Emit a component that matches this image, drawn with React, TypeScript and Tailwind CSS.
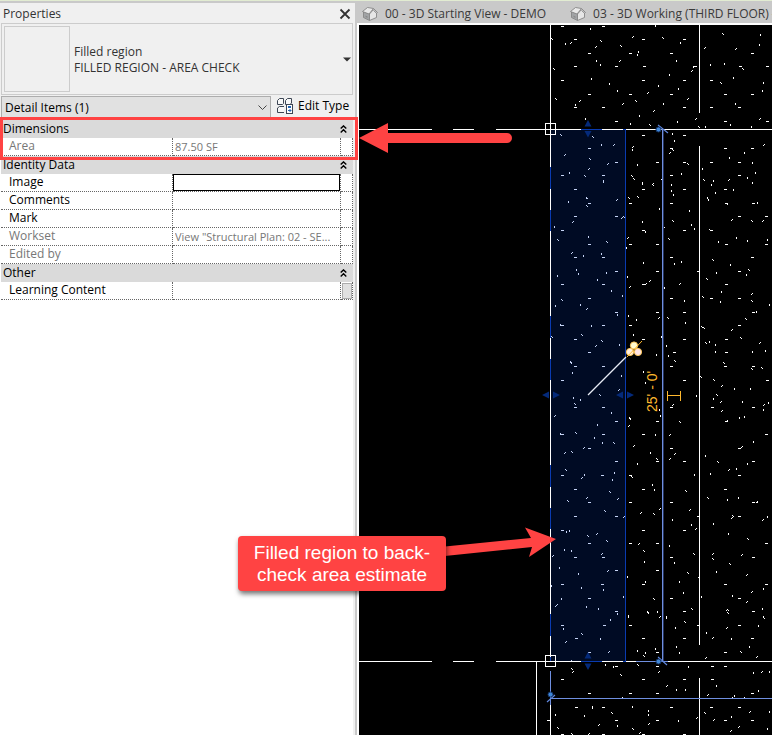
import React from "react";

const HATCH_H =
  "562,26 603,26 575,39 643,39 684,39 589,53 630,53 671,53 752,53 575,66 616,66 644,66 695,66 740,66 767,66 562,80 643,80 684,80 711,80 589,94 630,94 671,94 725,94 752,94 575,107 603,107 684,107 711,107 739,107 616,121 725,121 767,121 643,135 684,135 589,148 671,148 725,148 752,148 616,162 657,162 684,162 711,162 739,162 562,175 603,175 671,175 739,175 575,189 643,189 684,189 725,189 589,203 630,203 671,203 726,203 753,203 575,216 616,216 739,216 766,216 562,230 643,230 684,230 711,230 589,244 630,244 657,244 726,244 766,244 575,257 603,257 671,257 752,257 616,271 657,271 698,271 739,271 562,284 603,284 643,284 726,284 589,298 671,298 711,298 739,298 616,312 657,312 684,312 753,312 562,325 603,325 630,325 739,325 575,339 643,339 684,339 726,339 589,352 674,352 726,352 575,366 603,366 671,366 725,366 753,366 562,380 684,380 767,380 575,407 603,407 671,407 712,407 753,407 616,421 657,421 726,421 562,434 603,434 643,434 766,434 589,448 671,448 739,448 616,461 657,461 684,461 753,461 562,475 602,475 630,475 739,475 575,489 643,489 725,489 589,502 630,502 671,502 753,502 575,516 616,516 698,516 739,516 562,530 643,530 684,530 589,543 630,543 657,543 766,543 575,557 603,557 671,557 753,557 616,570 657,570 562,584 602,584 643,584 725,584 766,584 589,598 671,598 739,598 616,611 684,611 753,611 562,625 604,625 630,625 698,625 739,625 576,638 643,638 684,638 752,638 589,652 657,652 725,652 616,666 657,666 712,666 725,666 562,679 643,679 684,679 712,679 589,693 630,693 657,693 752,693 576,707 603,707 671,707 711,707 739,707 548,720 616,720 657,720 725,720 752,720 562,734 603,734 643,734 684,734";

const HATCH_V =
  "590,28 655,25 565,43 638,51 637,54 680,42 760,34 759,44 596,60 600,64 676,60 669,74 693,66 724,63 710,64 591,78 609,83 658,85 617,90 678,88 733,77 763,82 762,90 575,104 663,103 735,103 585,118 630,123 639,115 677,121 705,126 730,124 751,126 601,144 632,149 672,133 674,140 637,164 681,173 702,168 729,157 744,152 752,162 755,172 569,172 603,181 642,183 671,184 711,184 747,177 707,197 673,194 603,180 586,197 568,201 554,226 588,236 601,253 583,255 576,269 578,273 557,275 606,272 597,279 611,290 622,295 555,305 580,304 617,314 560,324 591,325 619,344 570,361 572,372 621,375 642,182 659,208 642,221 645,231 626,247 643,262 627,276 628,315 636,319 633,334 661,336 656,354 643,371 671,190 689,210 691,224 694,228 674,263 681,261 664,287 684,300 685,322 666,345 668,355 713,180 715,192 733,189 752,182 708,199 757,202 718,241 736,237 747,240 767,239 730,264 746,274 716,272 721,291 720,301 769,304 756,311 709,341 715,344 765,350 715,351 752,351 571,362 573,397 580,399 696,395 713,398 734,388 750,388 742,401 768,402 645,382 659,409 611,412 597,424 594,437 602,442 560,433 584,474 614,472 612,479 566,531 569,530 564,549 571,550 559,567 578,573 551,585 581,587 603,589 561,598 623,596 586,606 598,608 660,415 655,434 650,452 637,463 652,484 654,489 644,561 627,576 645,581 628,616 694,474 672,519 691,524 669,545 674,562 679,581 683,592 701,596 666,617 739,417 744,416 763,409 753,441 705,455 747,463 736,468 710,473 727,499 738,497 757,501 713,523 767,516 728,533 716,571 732,595 763,588 762,608 586,606 610,619 563,628 600,638 617,613 628,615 666,616 657,611 675,627 663,635 637,650 645,652 655,648 679,652 676,646 763,616 758,625 706,632 731,638 749,646 605,664 613,666 688,666 676,689 685,689 716,685 753,672 769,671 734,695 758,690 592,706 592,707 622,697 632,706 584,715 555,714 617,725 648,710 648,714 678,720 731,716 767,728 769,711";

const HATCH_D =
  "632,36 570,42 595,46 704,47 735,48 619,60 691,70 647,92 579,100 622,103 653,110 687,98 695,118 759,118 613,144 632,146 669,152 564,154 588,168 607,163 763,144 652,183 661,178 728,179 616,199 572,221 621,217 571,252 586,308 595,345 627,237 629,286 645,283 649,280 658,317 663,227 679,283 731,219 762,220 751,293 731,329 759,342 618,389 721,385 672,404 721,410 554,415 583,447 564,452 581,477 586,497 617,498 623,516 596,533 601,553 552,555 607,570 555,605 628,425 633,445 640,512 659,508 638,543 672,404 669,434 674,453 669,458 689,509 695,528 698,576 720,401 726,420 763,404 741,446 728,469 756,501 731,517 762,519 712,553 741,554 746,574 751,591 746,601 556,604 565,641 608,651 659,616 726,609 726,627 712,637 705,657 756,656 572,671 658,671 666,685 761,671 731,697 707,694 598,724 588,733 648,723 639,732 696,717 713,719 730,730 738,726 749,711";

const HATCH_B =
  "662,37 551,38 600,40 620,45 722,33 553,68 742,68 720,82 555,98 635,100 649,124 698,126 560,134 592,136 672,149 589,158 687,163 584,175 631,175 633,178 703,179 586,197 637,196 586,205 623,216 557,239 606,241 561,299 551,336 581,334 601,340 628,197 652,184 667,317 672,220 668,238 674,360 726,203 751,220 709,229 712,259 748,269 706,278 702,296 751,300 745,318 701,326 703,327 740,337 723,362 751,368 761,367 700,376 599,394 713,379 716,394 705,342 629,417 629,418 574,403 575,432 613,442 571,451 565,469 609,491 567,500 604,510 587,535 606,540 656,458 631,476 653,513 643,550 653,598 647,612 679,421 685,490 693,553 687,572 691,608 717,461 707,497 732,515 747,538 712,558 729,563 727,609 727,612 763,617 581,633 647,611 684,621 643,655 740,651 571,660 571,668 620,674 637,664 744,697 611,712 557,727 571,733 632,728 704,712";

function marks(list: string, shape: string) {
  return list
    .split(" ")
    .map((p) => `M${p}${shape}`)
    .join("");
}

const HATCH =
  marks(HATCH_H, "m-1,0h3v1h-3z") +
  marks(HATCH_V, "h1v2h-1z") +
  marks(HATCH_D, "m0,1h1v1h-1zm1,-1h1v1h-1z") +
  marks(HATCH_B, "h1v1h-1zm1,1h1v1h-1z");

function Hatch() {
  return <path d={HATCH} />;
}

function HouseIcon() {
  return (
    <svg width="16" height="16" viewBox="0 0 16 16" aria-hidden="true" className="shrink-0" strokeLinejoin="round" stroke="#868686" strokeWidth="0.9">
      <path d="M1.5 6 V11.5 L7.5 14.5 V7.5 Z" fill="#a2a4a6" />
      <path d="M7.5 14.5 V8 L11.5 3.500 L14.5 6.500 V11.5 Z" fill="#e6e6e6" />
      <path d="M.5 5.500 L5.500 1.500 L11.500 2.500 L7 8 Z" fill="#e9e9e9" />
      <path d="M11.500 2.500 L15.500 6.500 L14.5 7.300 L11.400 4.300" fill="#cfcfcf" />
      <path d="M3.500 9.500 V11 L5.500 12 V10.500 Z" fill="#8a8a8a" stroke="none" />
    </svg>
  );
}

function EditTypeIcon() {
  return (
    <svg width="17" height="17" viewBox="0 0 17 17" aria-hidden="true" fill="none" stroke="#3d4654">
      <path d="M.5 2.5 L2.5.5 H6.5 V5.5 L5.5 6.5 H.5 Z M8.5 2.5 L10.5.5 H14.5 V5 L13 6.5 H8.5 Z" fill="#f8f8f8" />
      <path d="M7 8.5 H2.5 L.5 10 V14.5 H7" fill="#f8f8f8" />
      <rect x="9.5" y="6.5" width="6" height="9" fill="#fff" />
      <path d="M11 9 H14" stroke="#2265b5" strokeWidth="2" />
      <path d="M11 12.5 H14 M12.5 11 L14 12.5 L12.5 14" stroke="#2265b5" />
    </svg>
  );
}

function DoubleChevron() {
  return (
    <svg width="7" height="8" viewBox="0 0 7 8" aria-hidden="true" fill="none" stroke="#000" strokeWidth="1.4">
      <path d="M.7 3.6 L3.5 .9 L6.3 3.6 M.7 7.4 L3.5 4.7 L6.3 7.4" />
    </svg>
  );
}

type Row = { label: string; value?: string; muted?: boolean; active?: boolean; button?: boolean };

const groups: { title: string; rows: Row[] }[] = [
  { title: "Dimensions", rows: [{ label: "Area", value: "87.50 SF", muted: true }] },
  {
    title: "Identity Data",
    rows: [
      { label: "Image", active: true },
      { label: "Comments" },
      { label: "Mark" },
      { label: "Workset", value: 'View "Structural Plan: 02 - SE...', muted: true },
      { label: "Edited by", muted: true },
    ],
  },
  { title: "Other", rows: [{ label: "Learning Content", button: true }] },
];

function PropertyTable() {
  return (
    <table className="ml-px w-[352px] table-fixed border-separate border-spacing-0 bg-white text-left leading-4">
      <colgroup>
        <col className="w-[172px]" />
        <col className="w-[168px]" />
        <col className="w-3" />
      </colgroup>
      {groups.map((group) => (
        <tbody key={group.title}>
          <tr className="h-[18px]">
            <th colSpan={3} className="bg-[#dadada] p-0 pl-0.5 font-normal">
              <button className="flex h-[18px] w-full items-center justify-between pr-1.5">
                {group.title}
                <DoubleChevron />
              </button>
            </th>
          </tr>
          {group.rows.map((row) => {
            const id = row.label.toLowerCase().replace(" ", "-");
            return (
              <tr key={row.label} className={row.muted ? "h-[18px] text-[#777777]" : "h-[18px]"}>
                <th className="border-r border-b border-dotted border-[#666666] p-0 pl-2 font-normal">
                  <label htmlFor={id} className="block h-[17px]">{row.label}</label>
                </th>
                <td className="border-r border-b border-dotted border-[#666666] p-0 text-[11px]">
                  <input
                    id={id}
                    readOnly={row.muted}
                    defaultValue={row.value}
                    className={
                      row.active
                        ? "block h-[17px] w-full border border-black px-0.5 outline-none"
                        : "block h-[17px] w-full px-0.5 outline-none"
                    }
                  />
                </td>
                <td className="border-r border-b border-dotted border-[#666666] p-0">
                  {row.button && (
                    <button aria-label="Browse" className="ml-px block h-4 w-2.5 border border-[#adadad] bg-[#e1e1e1]" />
                  )}
                </td>
              </tr>
            );
          })}
        </tbody>
      ))}
    </table>
  );
}

function PropertiesPanel() {
  return (
    <aside className="flex w-[357px] shrink-0 flex-col border-t-2 border-r-2 border-[#c9c9c9] bg-[#f0f0f0]">
      <header className="flex h-5 items-center justify-between pt-0.5 pr-1 pl-[3px]">
        <h1 className="text-[#333333]">Properties</h1>
        <button aria-label="Close">
          <svg width="12" height="12" viewBox="0 0 12 12" stroke="#333" strokeWidth="1.8">
            <path d="M1.5 1.5 L10.5 10.5 M10.5 1.5 L1.5 10.5" />
          </svg>
        </button>
      </header>
      <button className="mr-0.5 ml-px flex h-[72px] items-center border border-[#cccccc] pr-px pl-0.5 text-left text-[#333333]">
        <span className="h-[66px] w-[66px] border border-[#cccccc]" />
        <span className="ml-1 flex-1 pt-0.5 leading-4">
          <span className="block">Filled region</span>
          <span className="block">FILLED REGION - AREA CHECK</span>
        </span>
        <svg width="8" height="5" viewBox="0 0 8 5" aria-hidden="true">
          <path d="M0 .5 H8 L4 4.5 Z" fill="#333" />
        </svg>
      </button>
      <div className="mt-px flex h-6 pl-px">
        <div className="relative w-[270px]">
          <select aria-label="Element filter" className="h-[23px] w-full appearance-none border border-[#adadad] bg-[#e1e1e1] pl-[3px]">
            <option>Detail Items (1)</option>
          </select>
          <svg width="9" height="6" viewBox="0 0 9 6" aria-hidden="true" fill="none" stroke="#444" className="pointer-events-none absolute top-[9px] right-1">
            <path d="M.5 .5 L4.5 4.5 L8.5 .5" />
          </svg>
        </div>
        <button className="flex h-5 items-center gap-1 pl-1.5">
          <EditTypeIcon />
          Edit Type
        </button>
      </div>
      <div className="mr-0.5 flex-1 bg-white">
        <PropertyTable />
      </div>
    </aside>
  );
}

function Drawing() {
  return (
    <svg className="block h-[710px] w-full bg-black" viewBox="359 25 413 710" preserveAspectRatio="xMinYMin slice" shapeRendering="crispEdges" role="img" aria-label="Structural plan">
      <defs>
        <clipPath id="region">
          <rect x="551" y="130" width="74" height="531" />
        </clipPath>
      </defs>
      <rect x="551" y="129" width="74" height="532" fill="#000b24" />
      <g fill="#fff">
        <Hatch />
      </g>
      <g fill="#c6d4f6" clipPath="url(#region)">
        <Hatch />
      </g>
      <g stroke="#fff">
        <path d="M359 129.5 H432 M453 129.5 H474 M496 129.5 H772 M359 661.5 H432 M453 661.5 H474 M496 661.5 H772" />
        <path d="M550.5 25 V661 M550.5 705 V735 M536.5 662 V735 M699.5 25 V113 M699.5 146 V645 M699.5 678 V735" />
      </g>
      <path
        d="M550.5 167 V189 M550.5 210 V231 M550.5 316 V338 M550.5 359 V380 M550.5 465 V487 M550.5 508 V529 M550.5 614 V636 M581 129.5 H602 M623 129.5 H626 M581 661.5 H602 M623 661.5 H626 M625.5 130 V661"
        stroke="#0a3bb0"
      />
      <path d="M663.5 129 V661" stroke="#26345e" />
      <path d="M662.5 129 V661 M550.5 671 V705 M550 698.5 H772 M636 661.5 H668" stroke="#6f8fe0" />
      <g shapeRendering="auto">
        <path d="M588 120 l3.500 6.500 h-7z M588 137.500 l3.500 -6.500 h-7z M588 652 l3.500 6.500 h-7z M588 670 l3.500 -6.500 h-7z M542 395 l7 -3.500 v7z M560 395 l-7 -3.500 v7z M616 395 l7 -3.500 v7z M634 395 l-7 -3.500 v7z" fill="#042a7a" />
        <path d="M658 125 L668 133 M658 657 L667 665 M547 702 L555 695" stroke="#5f86dc" strokeWidth="1.200" />
        <g fill="#3f86d6" stroke="#16366a">
          <circle cx="658.500" cy="129.500" r="2.500" />
          <circle cx="658.500" cy="661.500" r="2.500" />
          <circle cx="550.500" cy="694.500" r="2.500" />
        </g>
        <path d="M588 395 L626 357" stroke="#e8ecf5" strokeWidth="1.300" />
        <g fill="#fff0e4" stroke="#ffc85a">
          <circle cx="630" cy="352" r="3.600" />
          <circle cx="638" cy="352" r="3.600" fill="#ffe4e4" />
          <circle cx="634" cy="345.500" r="3.600" fill="#fffbd0" />
        </g>
        <path d="M627 357 L642 341" stroke="#ffb92e" />
        <text transform="translate(657 412) rotate(-90)" fill="#ffb92e" fontSize="14" fontFamily="'Liberation Sans', Arial, sans-serif">
          25' - 0'
        </text>
      </g>
      <path d="M667.5 391 V401 M680.5 391 V401 M667 395.500 H681" stroke="#ffb92e" fill="none" />
      <rect x="545.5" y="123.5" width="10" height="11" fill="none" stroke="#fff" />
      <rect x="545.5" y="655.5" width="10" height="11" fill="none" stroke="#fff" />
      <path d="M550.5 657 V661" stroke="#0a3bb0" />
    </svg>
  );
}

function ViewArea() {
  return (
    <main className="min-w-0 flex-1 overflow-hidden bg-[#c9c9c9]">
      <nav className="flex h-[22px] items-center gap-6 pt-1 pl-[5px] whitespace-nowrap text-[#3a3a3a]">
        <button className="flex shrink-0 items-center gap-[7px]">
          <HouseIcon />
          00 - 3D Starting View - DEMO
        </button>
        <button className="flex shrink-0 items-center gap-[7px]">
          <HouseIcon />
          03 - 3D Working (THIRD FLOOR) -
        </button>
      </nav>
      <div className="border-t-2 border-l-2 border-white">
        <Drawing />
      </div>
    </main>
  );
}

function Annotations() {
  return (
    <div className="pointer-events-none absolute inset-x-0 -top-px bottom-0">
      <div className="absolute top-[117px] left-0 h-[43px] w-[358px] border-3 border-[#ff4343]" />
      <svg className="absolute top-0 left-0" width="772" height="735" viewBox="0 0 772 735" fill="#ff4343" aria-hidden="true">
        <path d="M359 138 L388 123 V133 H507 A5 5 0 0 1 507 143 H388 V153 Z" />
        <path d="M440 547 L531 538 L525 527.500 L556 539 L529 557 L532 547 L440 556.500 Z" />
      </svg>
      <p className="absolute top-[536px] left-[238px] w-[208px] rounded bg-[#ff4343] pt-1.5 pb-[5px] text-center font-['Liberation_Sans',Arial,sans-serif] text-[19px] leading-[22px] text-white shadow-[1px_3px_5px_rgba(0,0,0,0.55)]">
        Filled region to back-
        <br />
        check area estimate
      </p>
    </div>
  );
}

export default function App() {
  return (
    <div className="relative flex min-h-screen overflow-hidden border-t border-[#e2ecd2] bg-[#c9c9c9] font-['Open_Sans','Noto_Sans',sans-serif] text-xs text-black">
      <PropertiesPanel />
      <ViewArea />
      <Annotations />
    </div>
  );
}
